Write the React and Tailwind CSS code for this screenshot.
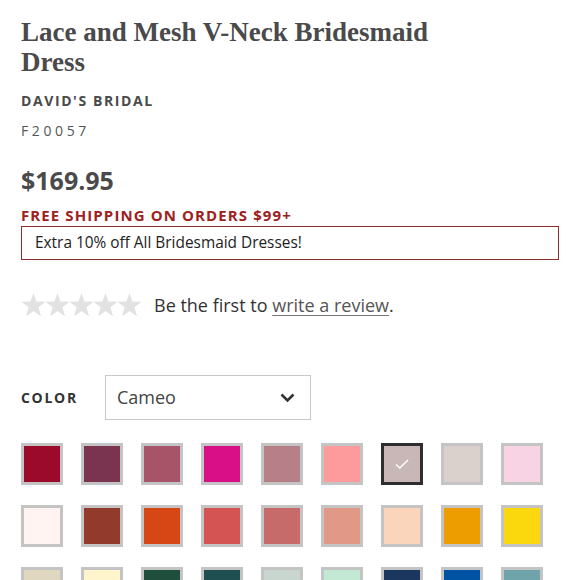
import { useState } from 'react';

const SWATCHES = [
    ['Wine', '#9b0a2b'], ['Sangria', '#7b3450'], ['Mulberry', '#a85468'], ['Fuchsia', '#d80f86'], ['Dusty Rose', '#b77f88'],
    ['Coral Reef', '#fc9a9c'], ['Cameo', '#c9b6b6'], ['Biscotti', '#dad0cc'], ['Petal', '#f7d3e3'],
    ['Ivory', '#fff4f2'], ['Cinnamon', '#923a2c'], ['Poppy', '#d74716'], ['Persimmon', '#d45353'], ['Terracotta', '#c76a6a'],
    ['Guava', '#e09887'], ['Peach', '#fad5bc'], ['Marigold', '#ed9d00'], ['Sunbeam', '#fbd80e'],
    ['Champagne', '#e0d7c0'], ['Canary', '#fef5cc'], ['Juniper', '#1f4f3c'], ['Peacock', '#1f4f50'], ['Sage', '#c8d6cf'],
    ['Mint', '#c3e9d5'], ['Marine', '#1b3760'], ['Horizon', '#0052a2'], ['Oasis', '#6fa4ab'],
];

function Star() {
    return (
        <svg width="25" height="24" viewBox="0 0 24 23" className="block -mr-px">
            <polygon
                points="12,0 14.9,8.2 23.6,8.4 16.7,13.7 19.2,22.6 12,17.3 4.8,22.6 7.3,13.7 0.4,8.4 9.1,8.2"
                fill="#e2e2e2"
            />
        </svg>
    );
}

export default function App() {
    const [selected, setSelected] = useState('Cameo');

    return (
        <div className="w-[580px] h-[580px] overflow-hidden bg-white px-[21px] pt-[17px] font-['Open_Sans',sans-serif] text-[#4a4a4a]">
            <h1 className="font-['Liberation_Serif',serif] text-[27px] leading-[30px] font-bold text-[#4a4a4a]">
                Lace and Mesh V-Neck Bridesmaid
                <br />
                Dress
            </h1>

            <div className="mt-[14px] text-[14px] leading-[20px] font-bold tracking-[1.6px]">DAVID'S BRIDAL</div>
            <div className="mt-[10px] text-[14px] leading-[20px] tracking-[3.6px] text-[#555]">F20057</div>

            <div className="mt-[23px] text-[25px] leading-[32px] font-bold">$169.95</div>

            <div className="mt-[9px] text-[15px] leading-[20px] font-bold tracking-[1.1px] text-[#9e2121]">
                FREE SHIPPING ON ORDERS $99+
            </div>
            <div className="mt-px flex h-[34px] w-[538px] items-center border-[1.5px] border-[#8e2b2b] px-[13px] text-[15.4px] leading-[20px] text-[#222]">
                Extra 10% off All Bridesmaid Dresses!
            </div>

            <div className="mt-[33px] flex items-center">
                <div className="flex">
                    {[0, 1, 2, 3, 4].map((i) => (
                        <Star key={i} />
                    ))}
                </div>
                <p className="ml-[13px] text-[18px] leading-[24px] text-[#333]">
                    Be the first to{' '}
                    <a href="#" className="text-[#555] underline underline-offset-[3px] decoration-[#777]">write a review</a>.
                </p>
            </div>

            <div className="mt-[58px] flex items-center">
                <span className="w-[84px] text-[14px] font-bold tracking-[1.7px] text-[#333]">COLOR</span>
                <div className="flex h-[45px] w-[206px] items-center justify-between border-[1.5px] border-[#c8c8c8] pl-[11px] pr-[15px]">
                    <span className="text-[18px] text-[#444]">{selected}</span>
                    <svg width="15" height="10" viewBox="0 0 15 10" fill="none">
                        <path d="M1.5 1.5 L7.5 7.5 L13.5 1.5" stroke="#333" strokeWidth="2.6" />
                    </svg>
                </div>
            </div>

            <div className="mt-[23px] grid grid-cols-[repeat(9,42px)] gap-x-[18px] gap-y-[20px]">
                {SWATCHES.map(([name, color]) => (
                    <button
                        key={name}
                        title={name}
                        onClick={() => setSelected(name)}
                        className={
                            'flex h-[42px] w-[42px] items-center justify-center border-[3px] ' +
                            (selected === name ? 'border-[#2e2e2e]' : 'border-[#c4c4c4]')
                        }
                        style={{ backgroundColor: color }}
                    >
                        {selected === name && (
                            <svg width="14" height="10" viewBox="0 0 14 10" fill="none">
                                <path d="M1 5.5 L4.8 9 L13 1" stroke="#fff" strokeWidth="1.4" />
                            </svg>
                        )}
                    </button>
                ))}
            </div>
        </div>
    );
}
